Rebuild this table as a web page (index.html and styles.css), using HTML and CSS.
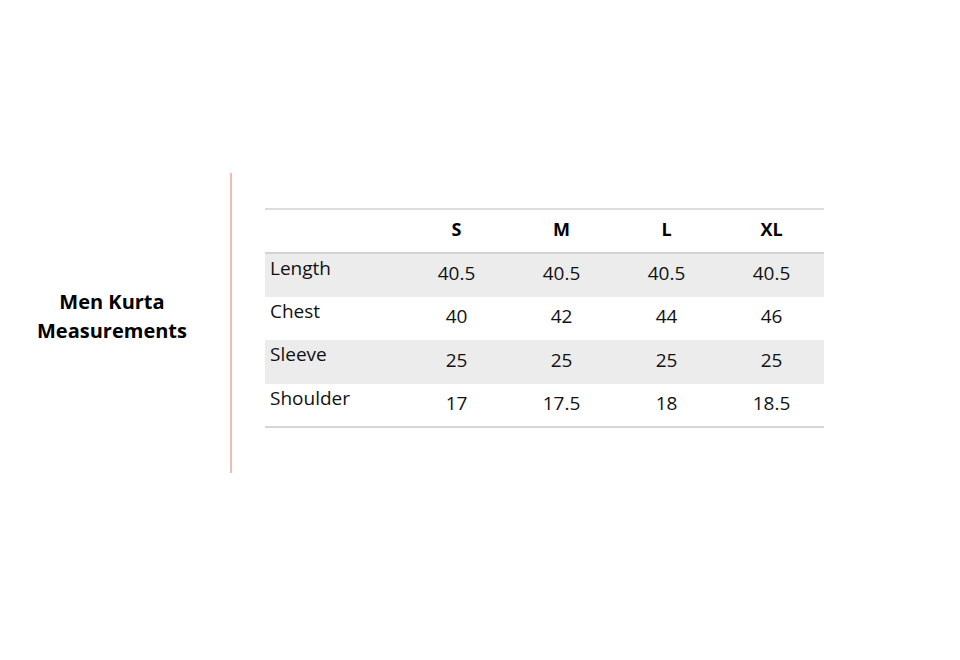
FILE: index.html
```html
<!DOCTYPE html>
<html>
<head>
<meta charset="utf-8">
<link rel="stylesheet" href="styles.css">
</head>
<body>
<div class="page">
  <div class="title-col">
    <h1 class="title">Men Kurta<br>Measurements</h1>
  </div>
  <div class="divider"></div>
  <div class="table-col">
    <table class="sizes">
      <thead>
        <tr><th class="label"></th><th>S</th><th>M</th><th>L</th><th>XL</th></tr>
      </thead>
      <tbody>
        <tr class="alt"><td class="label">Length</td><td>40.5</td><td>40.5</td><td>40.5</td><td>40.5</td></tr>
        <tr><td class="label">Chest</td><td>40</td><td>42</td><td>44</td><td>46</td></tr>
        <tr class="alt"><td class="label">Sleeve</td><td>25</td><td>25</td><td>25</td><td>25</td></tr>
        <tr><td class="label">Shoulder</td><td>17</td><td>17.5</td><td>18</td><td>18.5</td></tr>
      </tbody>
    </table>
  </div>
</div>
</body>
</html>
```

FILE: styles.css
```css
html, body {
  margin: 0;
  padding: 0;
  background: #ffffff;
}
body {
  font-family: "Open Sans", "Liberation Sans", sans-serif;
  color: #111111;
}
.page {
  display: flex;
  align-items: flex-start;
  padding-top: 173px;
  height: 660px;
  box-sizing: border-box;
}
.title-col {
  width: 230px;
  height: 300px;
  display: flex;
  align-items: center;
  justify-content: center;
  padding-right: 6px;
  box-sizing: border-box;
}
.title {
  margin: 0;
  font-size: 20px;
  font-weight: 700;
  line-height: 29px;
  text-align: center;
  color: #000;
  padding-bottom: 14px;
}
.divider {
  width: 2px;
  height: 300px;
  background: #f6b9b9;
}
.table-col {
  padding-left: 33px;
  padding-top: 35px;
}
.sizes {
  border-collapse: collapse;
  width: 559px;
  table-layout: fixed;
  font-size: 19px;
}
.sizes th, .sizes td {
  box-sizing: border-box;
  padding: 0;
  text-align: center;
  width: 105px;
}
.sizes th.label, .sizes td.label {
  width: 139px;
  text-align: left;
  padding-left: 5px;
}
.sizes thead tr {
  border-top: 2px solid #dcdcdc;
  border-bottom: 2px solid #d3d3d3;
}
.sizes thead th {
  height: 44px;
  font-weight: 700;
  font-size: 18px;
  color: #000;
  vertical-align: middle;
  padding-bottom: 4px;
}
.sizes tbody td {
  height: 43.5px;
  vertical-align: middle;
  line-height: 24px;
  padding-bottom: 4px;
}
.sizes tbody td.label {
  vertical-align: top;
  padding-top: 2px;
  padding-bottom: 0;
}
.sizes tbody tr.alt {
  background: #ececec;
}
.sizes tbody tr:last-child {
  border-bottom: 2px solid #d6d6d6;
}
```
